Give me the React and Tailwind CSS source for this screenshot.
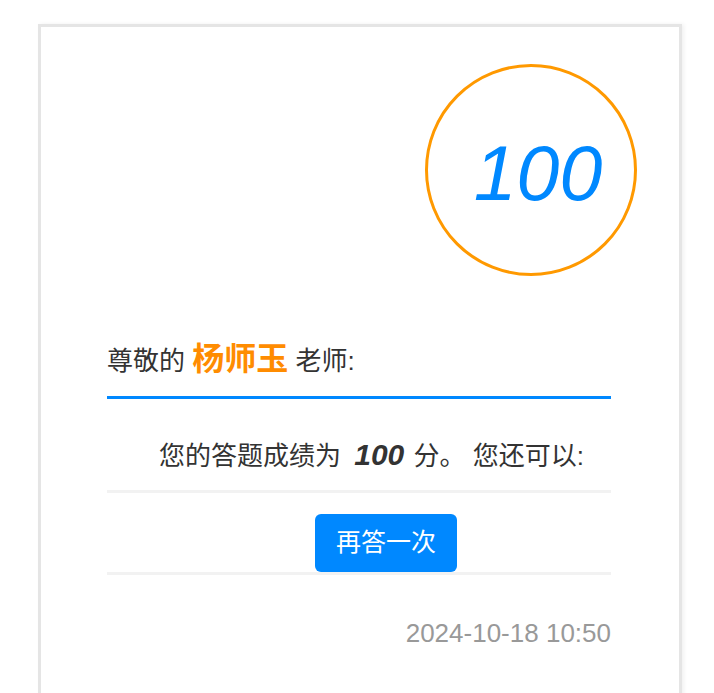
import React from 'react';

const font = { fontFamily: '"Liberation Sans", "Noto Sans CJK SC", sans-serif' };

const ScoreBadge = ({ score }) => (
    <div className="flex justify-end mr-[-26px]">
        <div className="w-[212px] h-[212px] rounded-full border-[3px] border-[#ff9900] flex items-center justify-center">
            <span className="text-[77px] italic text-[#0088ff] leading-none pl-[14px] pt-[6px]">{score}</span>
        </div>
    </div>
);

export default function App() {
    const score = 100;
    return (
        <div className="min-h-screen bg-white pt-[24px] pl-[38px]" style={font}>
            <div className="w-[644px] min-h-[700px] border-[3px] border-[#e5e5e5] shadow-[2px_0_4px_rgba(0,0,0,0.06)] pl-[66px] pr-[68px] pt-[37px] pb-[60px] text-[#333]">
                <ScoreBadge score={score} />

                {/* greeting */}
                <div className="mt-[63px] pb-[15px] border-b-[3px] border-[#0088ff] text-[26px] leading-[40px]">
                    尊敬的 <span className="text-[32px] font-bold text-[#ff8c00]">杨师玉</span> 老师:
                </div>

                <div className="pt-[38px] pb-[16px] border-b-[3px] border-[#f2f2f2] text-[26px] leading-[36px] indent-[2em]">
                    您的答题成绩为 <b className="italic text-[30px] ml-[6px] mr-[2px]">{score}</b> 分。 您还可以:
                </div>

                <div className="pt-[21px] pl-[54px] border-b-[3px] border-[#f2f2f2] flex justify-center">
                    <button className="h-[58px] px-[21px] rounded-[6px] bg-[#0088ff] text-white text-[25px]">
                        再答一次
                    </button>
                </div>

                <div className="mt-[43px] text-right text-[26px] text-[#999] leading-[30px]">
                    2024-10-18 10:50
                </div>
            </div>
        </div>
    );
}
